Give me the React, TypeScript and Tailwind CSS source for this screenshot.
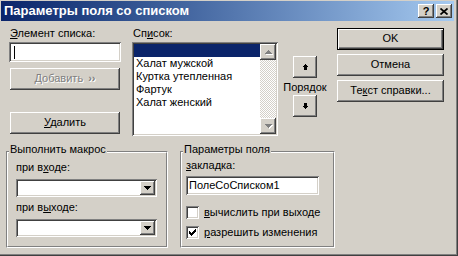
import type { ReactNode } from "react";

// Classic Windows 2000 bevels, done with stacked inset shadows.
const raised =
  "shadow-[inset_-1px_-1px_#404040,inset_1px_1px_#ffffff,inset_-2px_-2px_#808080,inset_2px_2px_#d4d0c8]";
const sunken =
  "shadow-[inset_1px_1px_#808080,inset_-1px_-1px_#ffffff,inset_2px_2px_#404040,inset_-2px_-2px_#d4d0c8]";
const defaultBtn =
  "shadow-[inset_1px_1px_#000000,inset_-1px_-1px_#000000,inset_2px_2px_#ffffff,inset_-2px_-2px_#404040,inset_-3px_-3px_#808080]";

const ITEMS = ["Халат мужской", "Куртка утепленная", "Фартук", "Халат женский"];

function Btn({
  children,
  className = "",
  isDefault = false,
  disabled = false,
}: {
  children: ReactNode;
  className?: string;
  isDefault?: boolean;
  disabled?: boolean;
}) {
  return (
    <div
      className={
        "flex h-[22px] items-center justify-center bg-[#d4d0c8] pb-[1px] " +
        (disabled ? "text-[#808080] [text-shadow:1px_1px_0_#ffffff] " : "text-black ") +
        (isDefault ? defaultBtn : raised) +
        " " +
        className
      }
    >
      {children}
    </div>
  );
}

function Label({ children, className = "" }: { children: ReactNode; className?: string }) {
  return <div className={"h-[13px] whitespace-nowrap " + className}>{children}</div>;
}

function DownTri({ color = "#000" }: { color?: string }) {
  return (
    <svg width="7" height="4" viewBox="0 0 7 4" shapeRendering="crispEdges">
      <rect x="0" y="0" width="7" height="1" fill={color} />
      <rect x="1" y="1" width="5" height="1" fill={color} />
      <rect x="2" y="2" width="3" height="1" fill={color} />
      <rect x="3" y="3" width="1" height="1" fill={color} />
    </svg>
  );
}

function UpTri({ color = "#000" }: { color?: string }) {
  return (
    <svg width="7" height="4" viewBox="0 0 7 4" shapeRendering="crispEdges">
      <rect x="3" y="0" width="1" height="1" fill={color} />
      <rect x="2" y="1" width="3" height="1" fill={color} />
      <rect x="1" y="2" width="5" height="1" fill={color} />
      <rect x="0" y="3" width="7" height="1" fill={color} />
    </svg>
  );
}

function OrderArrow({ down = false }: { down?: boolean }) {
  return (
    <svg width="5" height="6" viewBox="0 0 5 6" shapeRendering="crispEdges" className={down ? "rotate-180" : ""}>
      <rect x="2" y="0" width="1" height="1" fill="#000" />
      <rect x="1" y="1" width="3" height="1" fill="#000" />
      <rect x="0" y="2" width="5" height="1" fill="#000" />
      <rect x="1" y="3" width="3" height="3" fill="#000" />
    </svg>
  );
}

function Combo() {
  return (
    <div className={"flex h-[18px] w-[141px] bg-white p-[2px] " + sunken}>
      <div className="flex-1" />
      <div className={"flex w-[15px] items-center justify-center bg-[#d4d0c8] " + raised}>
        <DownTri />
      </div>
    </div>
  );
}

function CheckBox({ checked }: { checked: boolean }) {
  return (
    <div className={"flex size-[13px] shrink-0 items-center justify-center bg-white " + sunken}>
      {checked ? (
        <svg width="7" height="7" viewBox="0 0 7 7" shapeRendering="crispEdges">
          <path d="M6 0h1v3H6zM5 1h1v3H5zM4 2h1v3H4zM3 3h1v3H3zM2 4h1v3H2zM1 3h1v3H1zM0 2h1v3H0z" fill="#000" />
        </svg>
      ) : null}
    </div>
  );
}

function Group({ title, className = "", children }: { title: string; className?: string; children: ReactNode }) {
  return (
    <div className={"h-[97px] border border-t-[#808080] border-l-[#808080] border-r-white border-b-white " + className}>
      <div className="h-full border border-t-white border-l-white border-r-[#808080] border-b-[#808080]">
        <div className="-mt-[10px] ml-[1px] w-fit bg-[#d4d0c8] px-[1px] leading-[13px]">{title}</div>
        {children}
      </div>
    </div>
  );
}

export default function App() {
  return (
    <div className="flex h-[256px] w-[458px] border-b border-r border-[#404040] bg-[#d4d0c8] font-['Liberation_Sans',Arial,sans-serif] text-[11px] leading-[13px] text-black">
      <div className="flex flex-1 flex-col border-b border-r border-[#808080] pb-[2px] pl-[1px] pr-[2px] pt-[1px]">
        {/* title bar */}
        <div className="flex h-[20px] items-center bg-linear-to-r from-[#0a246a] to-[#a6caf0] pl-[3px] pr-[2px]">
          <span className="flex-1 text-[13px] font-bold leading-[16px] text-white">Параметры поля со списком</span>
          <div className="flex gap-[2px]">
            <div className={"flex h-[14px] w-[16px] items-center justify-center bg-[#d4d0c8] text-[11px] font-bold leading-none " + raised}>
              ?
            </div>
            <div className={"flex h-[14px] w-[16px] items-center justify-center bg-[#d4d0c8] " + raised}>
              <svg width="8" height="7" viewBox="0 0 8 7">
                <path d="M0.5 0.5L7.5 6.5M7.5 0.5L0.5 6.5" stroke="#000" strokeWidth="1.7" />
              </svg>
            </div>
          </div>
        </div>

        {/* upper area */}
        <div className="flex items-start">
          <div className="ml-[8px] flex w-[112px] flex-col">
            <Label className="mt-[6px] pl-[1px]">
              <u>Э</u>лемент списка:
            </Label>
            <div className={"mt-[2px] flex h-[20px] items-center bg-white pl-[5px] " + sunken}>
              <span className="h-[13px] w-[1px] bg-black" />
            </div>
            <Btn disabled className="ml-[1px] mt-[6px] w-[110px] gap-[5px]">
              <span>Добавить</span>
              <span className="font-bold">››</span>
            </Btn>
            <Btn className="ml-[1px] mt-[22px] w-[110px]">
              <span>
                <u>У</u>далить
              </span>
            </Btn>
          </div>

          <div className="ml-[11px] flex w-[146px] flex-col">
            <Label className="mt-[6px] pl-[1px]">
              Сп<u>и</u>сок:
            </Label>
            <div className={"mt-[2px] flex h-[94px] bg-white p-[2px] " + sunken}>
              <div className="flex flex-1 flex-col">
                <div className="h-[13px] bg-[#0a246a]" />
                {ITEMS.map((item) => (
                  <div key={item} className="h-[13px] whitespace-nowrap pl-[2px]">
                    {item}
                  </div>
                ))}
              </div>
              <div className="flex w-[16px] flex-col bg-[image:repeating-conic-gradient(#ffffff_0_25%,#d4d0c8_0_50%)] bg-[length:2px_2px]">
                <div className={"flex h-[16px] items-center justify-center bg-[#d4d0c8] pb-[1px] " + raised}>
                  <span className="[filter:drop-shadow(1px_1px_0_#ffffff)]">
                    <UpTri color="#808080" />
                  </span>
                </div>
                <div className="flex-1" />
                <div className={"flex h-[16px] items-center justify-center bg-[#d4d0c8] " + raised}>
                  <span className="[filter:drop-shadow(1px_1px_0_#ffffff)]">
                    <DownTri color="#808080" />
                  </span>
                </div>
              </div>
            </div>
          </div>

          <div className="ml-[5px] flex w-[44px] flex-col items-center">
            <Btn className="mt-[35px] w-[24px]">
              <OrderArrow />
            </Btn>
            <Label className="mt-[3px]">Порядок</Label>
            <Btn className="mt-[1px] w-[24px]">
              <OrderArrow down />
            </Btn>
          </div>

          <div className="ml-[10px] flex w-[107px] flex-col">
            <Btn isDefault className="mt-[7px]">
              OK
            </Btn>
            <Btn className="mt-[4px]">Отмена</Btn>
            <Btn className="mt-[4px]">
              <span>
                Те<u>к</u>ст справки...
              </span>
            </Btn>
          </div>
        </div>

        {/* group boxes */}
        <div className="mt-[15px] flex">
          <Group title="Выполнить макрос" className="ml-[5px] w-[162px]">
            <div className="ml-[8px] flex flex-col">
              <Label className="mt-[5px]">
                при в<u>х</u>оде:
              </Label>
              <div className="mt-[5px]">
                <Combo />
              </div>
              <Label className="mt-[4px]">
                при в<u>ы</u>ходе:
              </Label>
              <div className="mt-[5px]">
                <Combo />
              </div>
            </div>
          </Group>

          <Group title="Параметры поля" className="ml-[12px] w-[155px]">
            <div className="ml-[4px] flex flex-col">
              <Label className="mt-[3px]">
                <u>з</u>акладка:
              </Label>
              <div className={"mt-[4px] flex h-[19px] w-[133px] items-center bg-white pl-[3px] " + sunken}>
                ПолеСоСписком1
              </div>
              <div className="mt-[11px] flex items-center gap-[5px]">
                <CheckBox checked={false} />
                <span>
                  <u>в</u>ычислить при выходе
                </span>
              </div>
              <div className="mt-[7px] flex items-center gap-[5px]">
                <CheckBox checked />
                <span>
                  <u>р</u>азрешить изменения
                </span>
              </div>
            </div>
          </Group>
        </div>
      </div>
    </div>
  );
}
